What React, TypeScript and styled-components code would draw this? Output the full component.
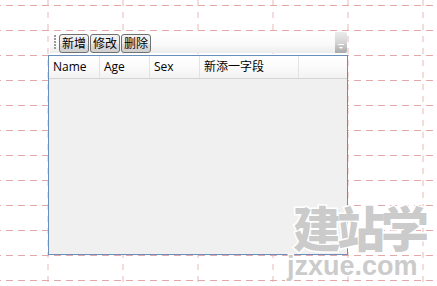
import React from "react";
import styled, { createGlobalStyle } from "styled-components";

const GlobalStyle = createGlobalStyle`
  html, body { margin: 0; padding: 0; background: #ffffff; }
  body { font-family: "Open Sans", "Noto Sans", "Noto Sans CJK SC", sans-serif; }
`;

const Stage = styled.div`
  position: relative;
  width: 437px;
  height: 286px;
  overflow: hidden;
  background: #ffffff;
`;

const GridLayer = styled.svg`
  position: absolute;
  left: 0;
  top: 0;
  width: 437px;
  height: 286px;
`;

const Designer = styled.div`
  position: relative;
  display: flex;
  flex-direction: column;
  padding: 32px 0 0 48px;
`;

const ToolBar = styled.div`
  display: flex;
  align-items: center;
  width: 297px;
  height: 21px;
  margin-left: 2px;
  background: linear-gradient(to bottom, #ffffff 0%, #fafafa 60%, #ececec 100%);
`;

const Grip = styled.div`
  width: 2px;
  height: 15px;
  margin: 0 3px 0 4px;
  background-image: linear-gradient(to bottom, #9a9a9a 2px, transparent 2px);
  background-size: 2px 3px;
`;

const ToolButton = styled.button<{ w: number }>`
  box-sizing: border-box;
  height: 19px;
  width: ${(p) => p.w}px;
  margin: 1px 1px 0 0;
  padding: 0;
  border: 1px solid #707070;
  border-radius: 3px;
  background: linear-gradient(to bottom, #f3f3f3 0%, #ebebeb 50%, #dddddd 50%, #cfcfcf 100%);
  font-family: "Noto Sans CJK SC", sans-serif;
  font-size: 12px;
  line-height: 16px;
  color: #000000;
  display: flex;
  align-items: center;
  justify-content: center;
`;

const Spacer = styled.div`
  flex: 1;
`;

const Overflow = styled.div`
  width: 12px;
  height: 21px;
  background: linear-gradient(to bottom, #ececec 0%, #d4d4d4 50%, #a9a9a9 100%);
  border-radius: 0 2px 2px 0;
  display: flex;
  flex-direction: column;
  align-items: center;
  justify-content: flex-end;
  padding-bottom: 3px;
  box-sizing: border-box;
`;

const GridBox = styled.div`
  box-sizing: border-box;
  width: 300px;
  height: 200px;
  margin-top: 2px;
  border: 1px solid #6a8fbd;
  background: #f0f0f0;
  display: flex;
  flex-direction: column;
`;

const HeaderRow = styled.div`
  display: flex;
  height: 23px;
  box-sizing: border-box;
  border-bottom: 1px solid #d5d5d5;
  background: linear-gradient(to bottom, #ffffff 0%, #fbfbfb 50%, #f2f2f2 100%);
`;

const HeaderCell = styled.div<{ w?: number }>`
  box-sizing: border-box;
  ${(p) => (p.w ? `width: ${p.w}px;` : "flex: 1;")}
  border-right: ${(p) => (p.w ? "1px solid #e3e3e3" : "none")};
  padding-left: 4px;
  font-family: "Open Sans", "Noto Sans CJK SC", sans-serif;
  font-size: 12px;
  line-height: 22px;
  color: #000000;
  white-space: nowrap;
`;

const WatermarkLogo = styled.svg`
  position: absolute;
  left: 280px;
  top: 186px;
  width: 157px;
  height: 100px;
  pointer-events: none;
`;

function GridLines() {
  const hs = [];
  for (let y = 5; y < 286; y += 25) hs.push(y);
  const vs = [];
  for (let x = 48; x < 437; x += 75) vs.push(x);
  return (
    <GridLayer viewBox="0 0 437 286">
      {vs.map((x) => (
        <line
          key={"v" + x}
          x1={x}
          y1={0}
          x2={x}
          y2={286}
          stroke="#f4dcdc"
          strokeWidth={2}
          strokeDasharray="6 6"
        />
      ))}
      {hs.map((y) => (
        <line
          key={"h" + y}
          x1={0}
          y1={y + 0.5}
          x2={437}
          y2={y + 0.5}
          stroke="#e2a7a7"
          strokeWidth={1}
          strokeDasharray="7 5"
          strokeDashoffset={6}
        />
      ))}
    </GridLayer>
  );
}

function Watermark() {
  return (
    <WatermarkLogo viewBox="0 0 157 100">
      <text
        x={13}
        y={61}
        fontFamily="'Noto Sans CJK SC', sans-serif"
        fontSize={48}
        fontWeight={900}
        letterSpacing={-4}
        fill="#cbcbcb"
        stroke="#ffffff"
        strokeWidth={3}
        paintOrder="stroke"
      >
        建站学
      </text>
      <text
        x={7}
        y={89}
        fontFamily="'Liberation Sans', Arial, sans-serif"
        fontSize={27}
        fontWeight={700}
        fill="#cbcbcb"
        stroke="#ffffff"
        strokeWidth={2.5}
        paintOrder="stroke"
      >
        jzxue.com
      </text>
    </WatermarkLogo>
  );
}

export default function App() {
  return (
    <>
      <GlobalStyle />
      <Stage>
        <GridLines />
        <Designer>
          <ToolBar>
            <Grip />
            <ToolButton w={30}>新增</ToolButton>
            <ToolButton w={30}>修改</ToolButton>
            <ToolButton w={30}>删除</ToolButton>
            <Spacer />
            <Overflow>
              <svg width="8" height="6" viewBox="0 0 8 6">
                <rect x="1" y="0" width="6" height="1" fill="#ffffff" />
                <path d="M2 3 L6 3 L4 5 Z" fill="#ffffff" />
              </svg>
            </Overflow>
          </ToolBar>
          <GridBox>
            <HeaderRow>
              <HeaderCell w={51}>Name</HeaderCell>
              <HeaderCell w={50}>Age</HeaderCell>
              <HeaderCell w={50}>Sex</HeaderCell>
              <HeaderCell w={99}>新添一字段</HeaderCell>
              <HeaderCell />
            </HeaderRow>
          </GridBox>
        </Designer>
        <Watermark />
      </Stage>
    </>
  );
}
